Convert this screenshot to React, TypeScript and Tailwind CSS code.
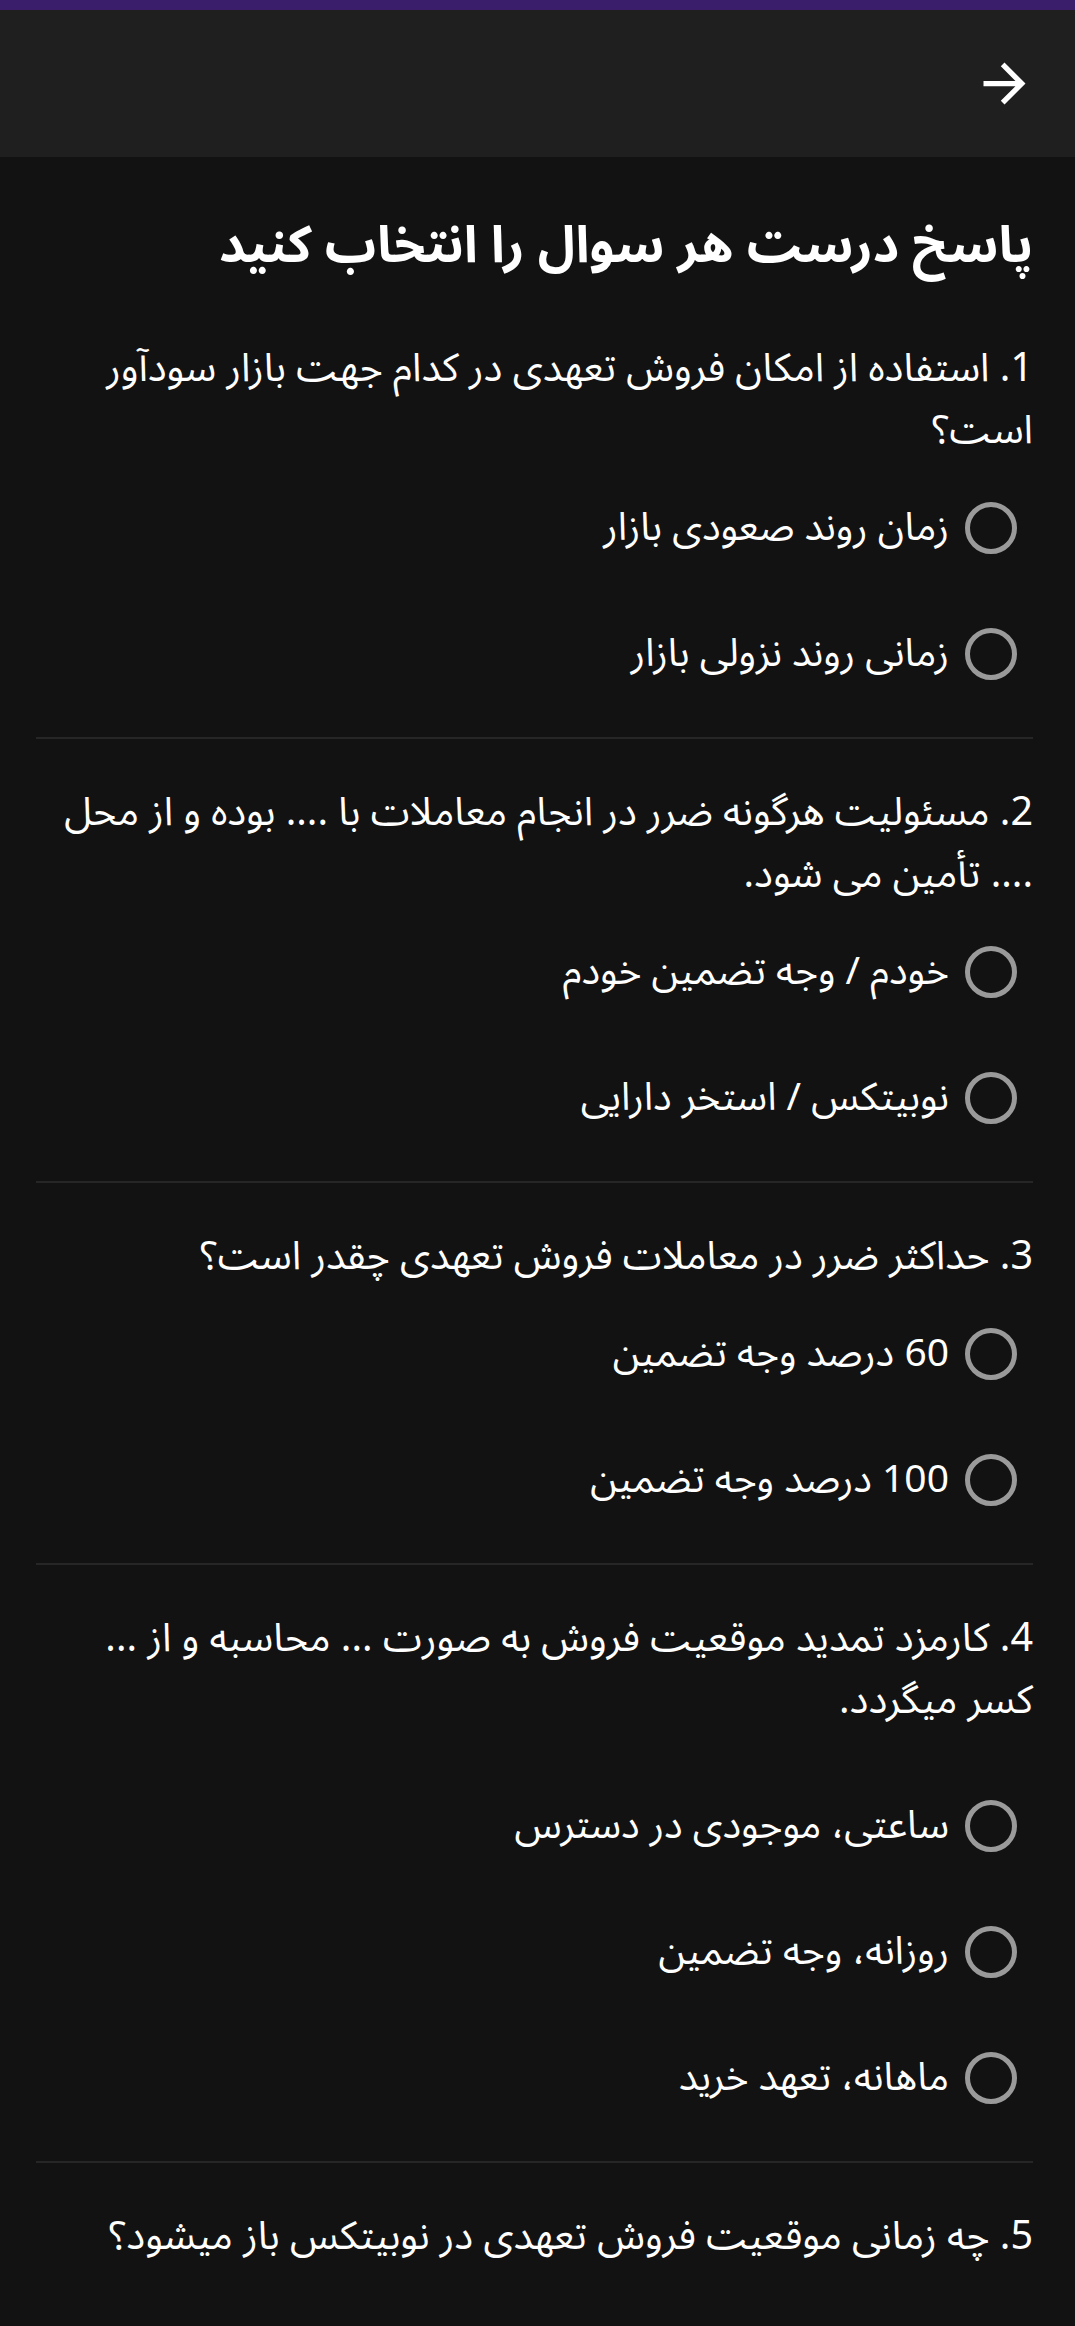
const questions = [
  {
    text: "1. استفاده از امکان فروش تعهدی در کدام جهت بازار سودآور است؟",
    options: ["زمان روند صعودی بازار", "زمانی روند نزولی بازار"],
  },
  {
    text: "2. مسئولیت هرگونه ضرر در انجام معاملات با .... بوده و از محل .... تأمین می شود.",
    options: ["خودم / وجه تضمین خودم", "نوبیتکس / استخر دارایی"],
  },
  {
    text: "3. حداکثر ضرر در معاملات فروش تعهدی چقدر است؟",
    options: ["60 درصد وجه تضمین", "100 درصد وجه تضمین"],
  },
  {
    text: "4. کارمزد تمدید موقعیت فروش به صورت ... محاسبه و از ... کسر میگردد.",
    options: ["ساعتی، موجودی در دسترس", "روزانه، وجه تضمین", "ماهانه، تعهد خرید"],
    extra: true,
  },
  {
    text: "5. چه زمانی موقعیت فروش تعهدی در نوبیتکس باز میشود؟",
    options: [],
  },
];

const Radio = () => (
  <span className="w-[52px] h-[52px] shrink-0 rounded-full border-[5px] border-[#9a9a9a]" />
);

const Question = ({ q, last }: { q: (typeof questions)[number]; last: boolean }) => (
  <div className={last ? "pt-[43px]" : "pt-[43px] pb-[20px] border-b-2 border-[#262626]"}>
    <p className="text-[39.5px] leading-[62px] text-white">{q.text}</p>
    <div className={q.extra ? "mt-[31px] flex flex-col" : "mt-[3px] flex flex-col"}>
      {q.options.map((o) => (
        <label key={o} className="h-[126px] flex items-center gap-4 pr-4">
          <Radio />
          <span className="text-[39px] text-white">{o}</span>
        </label>
      ))}
    </div>
  </div>
);

export default function App() {
  return (
    <div
      dir="rtl"
      className="min-h-screen bg-[#121212]"
      style={{ fontFamily: '"Noto Sans Arabic", "Vazirmatn", "DejaVu Sans", sans-serif' }}
    >
      <div className="h-[10px] bg-[#3a1d6b]" />
      <header className="h-[147px] bg-[#1f1f1f] flex items-center pr-[29px]">
        <button className="w-[84px] h-[84px] flex items-center justify-center">
          <svg width="63" height="63" viewBox="0 0 24 24" fill="#ffffff">
            <path d="M12 4l-1.41 1.41L16.17 11H4v2h12.17l-5.58 5.59L12 20l8-8z" />
          </svg>
        </button>
      </header>
      <main className="pr-[42px] pl-9 pt-[53px]">
        <h1 className="text-[51px] leading-[72px] font-bold text-white">
          پاسخ درست هر سوال را انتخاب کنید
        </h1>
        <div className="mt-[13px]">
          {questions.map((q, i) => (
            <Question key={i} q={q} last={i === questions.length - 1} />
          ))}
        </div>
      </main>
    </div>
  );
}
